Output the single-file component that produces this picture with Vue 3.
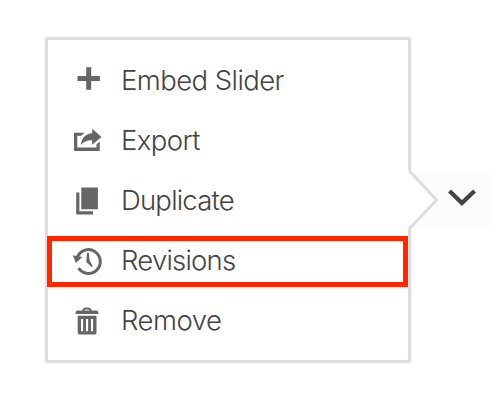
<script setup>
const items = [
  { id: 'embed', label: 'Embed Slider' },
  { id: 'export', label: 'Export' },
  { id: 'duplicate', label: 'Duplicate' },
  { id: 'revisions', label: 'Revisions' },
  { id: 'remove', label: 'Remove' },
]
</script>

<template>
  <main class="stage">
    <nav class="menu">
      <a v-for="item in items" :key="item.id" class="item" :class="item.id">
        <svg class="icon" viewBox="0 0 36 36" width="36" height="36">
          <path v-if="item.id === 'embed'" d="M17.2 5.2h5v8.8h8.7v5h-8.7v8.8h-5V19H8.5v-5h8.7z" />
          <g v-else-if="item.id === 'export'">
            <path d="M5 10.7h10.5l-3.2 3H8.3v11.7h19.2v-3.2l3.2-2.6v9.4H5z" />
            <path d="M23.2 6.7l9.3 8.2-9.3 7.8v-4.4c-5-.2-8.6 1.2-11.4 4.8 .8-7.6 5-11.4 11.4-11.9z" />
          </g>
          <path v-else-if="item.id === 'duplicate'" d="M12.3 5.4h16.6v21.8H12.3zM7.2 10.4h3.2v18.8h13.6v3.3H7.2z" />
          <g v-else-if="item.id === 'revisions'">
            <path class="line" d="M8.2 15.5A11.9 11.9 0 1 1 9.5 26.2" />
            <path d="M3.7 13.3l9.6 1.6-6.3 6.2z" />
            <path d="M18 10.8h1.9l.6 7.4 3.2 6-1.2.9-5.2-5.2z" />
          </g>
          <g v-else>
            <path class="lid" d="M14.2 9.2q.2-2.8 3-2.8h1.6q2.8 0 3 2.8" />
            <path d="M8.6 8.6h18.8q1.8 0 2.2 3.4H6.4q.4-3.4 2.2-3.4z" />
            <path fill-rule="evenodd" d="M8.7 13.7h18.8v17q0 1.8-1.8 1.8H10.5q-1.8 0-1.8-1.8zM12 17v12.3h2.1V17zM17 17v12.3h2.1V17zM22 17v12.3h2.1V17z" />
          </g>
        </svg>
        <span class="label">{{ item.label }}</span>
      </a>
    </nav>
    <button class="toggle" aria-label="Menu">
      <svg width="28" height="18" viewBox="0 0 28 18">
        <path d="M1.5 2l12.4 12L26.5 2" />
      </svg>
    </button>
    <svg class="pointer" width="32" height="62" viewBox="0 0 32 62">
      <path class="fill" d="M0 1L2 1 30.5 31 2 60H0z" />
      <path class="edge" d="M2 1.5L29.5 31 2 60" />
    </svg>
  </main>
</template>

<style>
body { background: #fff; }
</style>

<style scoped>
.stage {
  position: relative;
  box-sizing: border-box;
  width: 500px;
  height: 400px;
  padding: 37px 0 0 45px;
  display: flex;
  align-items: flex-start;
  overflow: hidden;
  background: #fff;
}
.menu {
  box-sizing: border-box;
  width: 366px;
  height: 326px;
  padding: 10px 0;
  border: 3px solid #ddd;
  border-radius: 4px;
  background: #fff;
  box-shadow: 0 0 2px #ddd;
}
.item {
  display: flex;
  align-items: center;
  height: 60px;
  gap: 16px;
  padding-left: 21px;
  color: #444;
}
.icon {
  flex: none;
  fill: #666;
}
.line {
  fill: none;
  stroke: #666;
  stroke-width: 3;
}
.lid {
  fill: none;
  stroke: #666;
  stroke-width: 2;
}
.label {
  font: 300 27.5px/60px Inter, "Liberation Sans", sans-serif;
  letter-spacing: -0.8px;
  white-space: nowrap;
}
.embed .label,
.export .label { letter-spacing: -0.57px; }
.remove .label { letter-spacing: -0.5px; }
.revisions {
  box-sizing: border-box;
  width: 361px;
  height: 51px;
  margin: 6px 0 3px -1px;
  padding: 0 0 3px 17px;
  border: 5px solid #ff2600;
}
.toggle {
  display: flex;
  align-items: center;
  box-sizing: border-box;
  width: 81px;
  height: 57px;
  margin: 134px 0 0;
  padding: 0 0 4px 37px;
  border: 0;
  background: #fcfcfc;
}
.toggle path {
  fill: none;
  stroke: #444;
  stroke-width: 4.2;
}
.pointer {
  position: absolute;
  left: 407px;
  top: 169px;
}
.fill { fill: #fff; }
.edge {
  fill: none;
  stroke: #ddd;
  stroke-width: 3;
}
</style>
